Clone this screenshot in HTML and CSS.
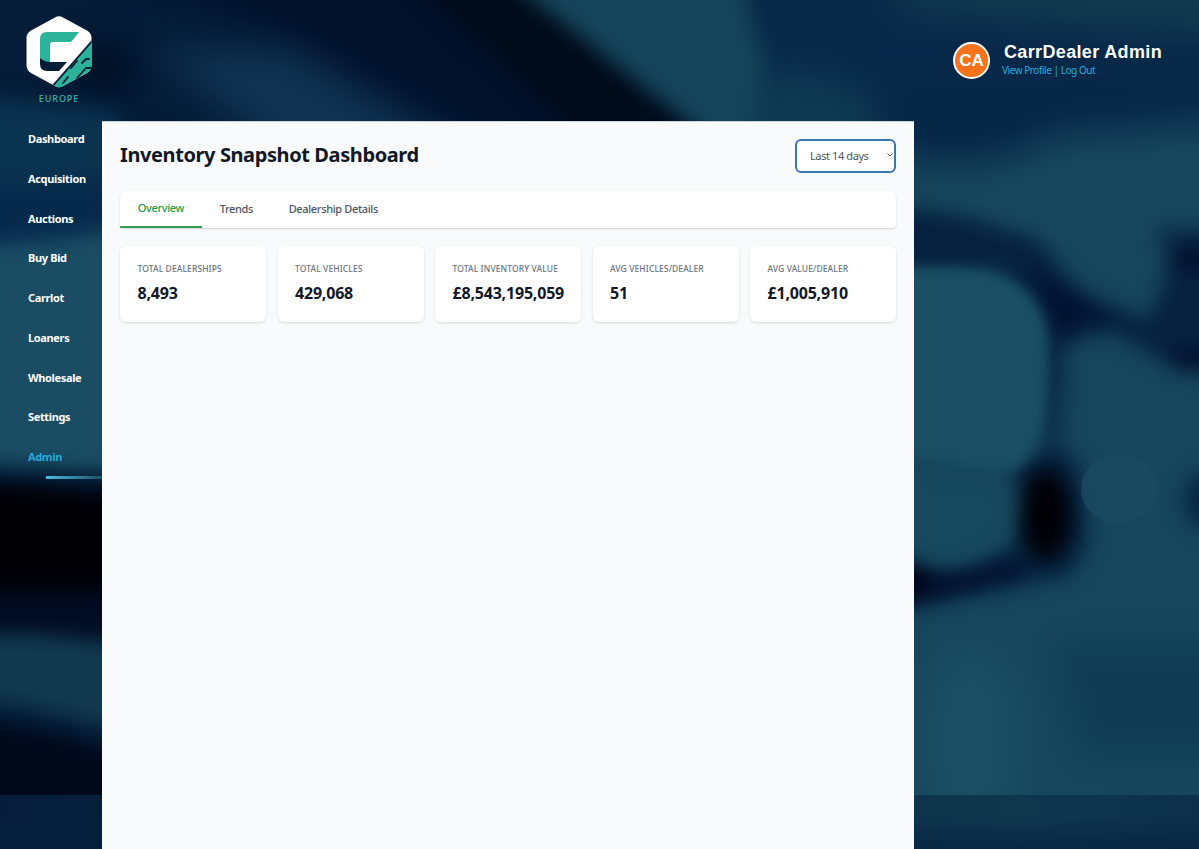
FILE: index.html
```html
<!DOCTYPE html>
<html lang="en">
<head>
    <meta charset="UTF-8">
    <meta name="viewport" content="width=device-width, initial-scale=1.0">
    <title>Inventory Snapshot Dashboard</title>
    <link rel="stylesheet" href="styles.css">
</head>
<body>
    <svg class="backdrop" viewBox="0 0 1199 849" preserveAspectRatio="none" aria-hidden="true">
        <defs>
            <filter id="soft" color-interpolation-filters="sRGB" filterUnits="userSpaceOnUse" x="-100" y="-100" width="1400" height="1050"><feGaussianBlur stdDeviation="10"/></filter>
            <filter id="softer" color-interpolation-filters="sRGB" filterUnits="userSpaceOnUse" x="-100" y="-100" width="1400" height="1050"><feGaussianBlur stdDeviation="18"/></filter>
            <filter id="crisp" color-interpolation-filters="sRGB" filterUnits="userSpaceOnUse" x="-100" y="-100" width="1400" height="1050"><feGaussianBlur stdDeviation="6"/></filter>
            <clipPath id="tile"><rect width="1199" height="795"/></clipPath>
            <linearGradient id="strip" x1="0" x2="1" y1="0" y2="0">
                <stop offset="0" stop-color="#051d3a"/>
                <stop offset="0.7" stop-color="#0c3149"/>
                <stop offset="0.85" stop-color="#10364e"/>
                <stop offset="1" stop-color="#0c304c"/>
            </linearGradient>
            <linearGradient id="stripFade" x1="0" x2="0" y1="0" y2="1">
                <stop offset="0.4" stop-color="#04203f" stop-opacity="0"/>
                <stop offset="1" stop-color="#04203f" stop-opacity="0.6"/>
            </linearGradient>
        </defs>
        <rect width="1199" height="849" fill="#041c38"/>
        <g clip-path="url(#tile)">
            <!-- top band -->
            <g filter="url(#softer)">
                <rect x="740" y="-60" width="560" height="280" fill="#08294a"/>
                <path d="M720 70L840 80L920 130V200H720Z" fill="#0f3a52"/>
                <path d="M900 -60H1300V40L1060 25L900 10Z" fill="#12394f"/>
                <path d="M150 50L290 50L490 170L300 170Z" fill="#0f3351"/>
                <path d="M110 -40H480L760 180H560L300 40Z" fill="#02102b"/>
                <ellipse cx="104" cy="68" rx="30" ry="20" fill="#000a1e"/>
            </g>
            <g filter="url(#soft)">
                <path d="M400 -30H500L760 190H640Z" fill="#000b1a"/>
                <path d="M495 -30H740L765 60L750 150H725Z" fill="#15445a"/>
                <path d="M-40 95L120 112V250H-40Z" fill="#0a3350"/>
                <path d="M-40 185L120 180V235L-40 245Z" fill="#062a4c"/>
                <path d="M-40 248L50 240L150 225V474L60 470L-40 464Z" fill="#1a4d64"/>
            </g>
            <!-- left side below the menu -->
            <g filter="url(#soft)">
                <path d="M-40 480L150 494V640H-40Z" fill="#000005"/>
                <path d="M-40 590H150V655H-40Z" fill="#010b22"/>
                <path d="M-40 634L40 634L150 645V738L50 712L-40 694Z" fill="#11394f"/>
                <path d="M-40 718L50 732L150 760V840H-40Z" fill="#01081a"/>
            </g>
            <!-- right side -->
            <g filter="url(#softer)">
                <rect x="860" y="190" width="400" height="680" fill="#16465c"/>
                <path d="M880 90H1260V105L1050 125L980 168L880 140Z" fill="#062645"/>
                <path d="M860 165L1000 160L1060 135L1260 120V240L1060 245L980 215L860 195Z" fill="#17475d"/>
                <path d="M1050 640H1260V760H1080Z" fill="#103d54"/>
                <ellipse cx="970" cy="740" rx="50" ry="90" fill="#1b4f64"/>
            </g>
            <g filter="url(#soft)">
                <path d="M880 205L960 215L1040 240L1064 275L1095 300L1150 320L1175 250L1150 230H1230V382L1160 360L1110 330L1064 345L1058 460H1048L1044 320L1000 270H880Z" fill="#06213f"/>
                <path d="M1030 262L1070 290L1130 322L1080 322L1058 345L1044 300Z" fill="#021231"/>
                <ellipse cx="1190" cy="259" rx="26" ry="8" fill="#020b29"/>
                <ellipse cx="1190" cy="361" rx="22" ry="9" fill="#020b29"/>
                <ellipse cx="1206" cy="500" rx="22" ry="28" fill="#062442"/>
                <path d="M1010 475L1050 445L1078 460L1088 540L1070 575L990 590L880 612V560L960 572L1020 540Z" fill="#06213f"/>
            </g>
            <g filter="url(#crisp)">
                <path d="M880 269H960C1020 275 1045 298 1046 350C1048 425 1033 462 1008 471C970 471 930 457 880 452Z" fill="#1a4f64"/>
            </g>
            <g filter="url(#soft)">
                <path d="M880 462L950 474L1012 484C1030 510 1008 548 960 563C930 567 912 556 880 540Z" fill="#16485e"/>
                <ellipse cx="1046" cy="515" rx="25" ry="46" fill="#000005"/>
                <path d="M885 560L925 578L1030 562L1020 574L930 598L885 606Z" fill="#010c29"/>
                <ellipse cx="912" cy="580" rx="18" ry="16" fill="#000518"/>
            </g>
            <ellipse cx="1119" cy="489" rx="38" ry="35" fill="#194a61" opacity="0.8"/>
        </g>
        <rect y="795" width="1199" height="54" fill="url(#strip)"/>
        <rect y="795" width="1199" height="54" fill="url(#stripFade)"/>
    </svg>

    <div class="layout">
        <aside class="sidebar">
            <div class="brand">
                <svg class="logo" width="66" height="72" viewBox="0 0 66 72">
                    <defs>
                        <clipPath id="hex"><path d="M29 1.500Q33 -.8 37 1.500L61 14.500Q65.500 17 65.500 22V49Q65.500 54 61 57L37 70Q33 72.500 29 70L5 57Q.5 54 .5 49V22Q.5 17 5 14.500Z"/></clipPath>
                    </defs>
                    <g clip-path="url(#hex)">
                        <rect width="66" height="72" fill="#fff"/>
                        <path d="M67 24L25 72H67Z" fill="#2bb298"/>
                        <path d="M67 24L24 73" fill="none" stroke="#051d36" stroke-width="1.800"/>
                        <g fill="none" stroke="#051d36" stroke-width="1.800" stroke-linecap="round" stroke-linejoin="round">
                            <path d="M63 43H60L56 47"/>
                            <path d="M51 45L45 52"/>
                            <path d="M66 52H60L51 62"/>
                            <path d="M42 61L37 67"/>
                        </g>
                    </g>
                    <path d="M21 16H53L45 26H27Q24 26 24 29V46H14V23Q14 16 21 16Z" fill="#2bb298"/>
                    <path d="M14 42Q18 46 25 46H41L33 55H21Q14 55 14 48Z" fill="#051d36"/>
                </svg>
                <span class="region">EUROPE</span>
            </div>
            <nav class="menu">
                <a>Dashboard</a>
                <a>Acquisition</a>
                <a>Auctions</a>
                <a>Buy Bid</a>
                <a>Carrlot</a>
                <a>Loaners</a>
                <a>Wholesale</a>
                <a>Settings</a>
                <a class="active">Admin</a>
            </nav>
        </aside>

        <main class="content">
            <div class="page-header">
                <h1>Inventory Snapshot Dashboard</h1>
                <button class="period">
                    <span>Last 14 days</span>
                    <svg width="6" height="4" viewBox="0 0 6 4"><path d="M.5 .5L3 3L5.500 .5" fill="none" stroke="#555" stroke-width=".9"/></svg>
                </button>
            </div>
            <div class="tabs">
                <a class="tab selected">Overview</a>
                <a class="tab">Trends</a>
                <a class="tab">Dealership Details</a>
            </div>
            <div class="stats">
                <div class="card">
                    <div class="card-label">TOTAL DEALERSHIPS</div>
                    <div class="card-value">8,493</div>
                </div>
                <div class="card">
                    <div class="card-label">TOTAL VEHICLES</div>
                    <div class="card-value">429,068</div>
                </div>
                <div class="card">
                    <div class="card-label">TOTAL INVENTORY VALUE</div>
                    <div class="card-value">£8,543,195,059</div>
                </div>
                <div class="card">
                    <div class="card-label">AVG VEHICLES/DEALER</div>
                    <div class="card-value">51</div>
                </div>
                <div class="card">
                    <div class="card-label">AVG VALUE/DEALER</div>
                    <div class="card-value">£1,005,910</div>
                </div>
            </div>
        </main>

        <div class="account">
            <div class="avatar">CA</div>
            <div class="account-info">
                <div class="account-name">CarrDealer Admin</div>
                <div class="account-links"><a>View Profile</a> | <a>Log Out</a></div>
            </div>
        </div>
    </div>
</body>
</html>
```
FILE: styles.css
```css
* {
    box-sizing: border-box;
}
body {
    margin: 0;
    height: 849px;
    overflow: hidden;
    background: #041c38;
    font-family: 'Noto Sans', 'Open Sans', sans-serif;
    color: #111827;
}
.backdrop {
    position: absolute;
    top: 0;
    left: 0;
    width: 1199px;
    height: 849px;
    z-index: -1;
}
.layout {
    display: grid;
    grid-template-columns: 102px 812px 1fr;
    height: 849px;
}
.brand {
    display: flex;
    flex-direction: column;
    align-items: center;
    width: 66px;
    height: 119px;
    margin-left: 26px;
    padding-top: 16px;
}
.logo {
    display: block;
}
.region {
    margin-top: 4px;
    font-size: 9px;
    font-weight: 500;
    line-height: 14px;
    letter-spacing: 0.9px;
    color: #3cb5ae;
}
.menu {
    display: flex;
    flex-direction: column;
}
.menu a {
    height: 39.75px;
    padding-left: 28px;
    font-size: 11px;
    font-weight: 700;
    line-height: 40px;
    letter-spacing: -0.35px;
    color: #fff;
    white-space: nowrap;
}
.menu a.active {
    color: #27a9dc;
}
.menu .active::after {
    content: "";
    display: block;
    height: 3px;
    margin: -1px 0 0 18px;
    background: linear-gradient(to right, #46bde0, #205066);
}
.content {
    margin-top: 121px;
    padding: 18px 18px 0;
    background: #f9fafc;
    border-top: 1px solid #cbd3dc;
}
.page-header {
    display: flex;
    justify-content: space-between;
    height: 51px;
}
h1 {
    margin: 0;
    font-size: 20px;
    line-height: 30px;
    letter-spacing: -0.4px;
    white-space: nowrap;
}
.period {
    display: flex;
    align-items: center;
    justify-content: space-between;
    width: 101px;
    height: 34px;
    margin-top: -1px;
    padding: 0 1px 2px 13px;
    border: 2px solid #3d75b0;
    border-radius: 6px;
    background: #fff;
    font-family: inherit;
    font-size: 11px;
    letter-spacing: -0.4px;
    color: #4b5563;
}
.tabs {
    display: flex;
    height: 37px;
    margin-bottom: 18px;
    border-radius: 6px 6px 3px 3px;
    background: #fff;
    box-shadow: 0 1px 2px rgba(0, 0, 0, 0.16);
}
.tab {
    padding: 0 17.8px;
    font-size: 11px;
    font-weight: 500;
    line-height: 35px;
    color: #4b5563;
    letter-spacing: -0.35px;
}
.tab.selected {
    line-height: 34px;
    border-bottom: 2px solid #349c55;
    color: #249b45;
}
.stats {
    display: grid;
    grid-template-columns: repeat(5, 1fr);
    gap: 11.500px;
}
.card {
    height: 76px;
    padding: 16px 0 0 17.500px;
    border-radius: 6px;
    background: #fff;
    box-shadow: 0 1px 3px rgba(0, 0, 0, 0.13);
    white-space: nowrap;
}
.card-label {
    font-size: 8.500px;
    font-weight: 500;
    line-height: 14px;
    letter-spacing: 0.1px;
    color: #6b7280;
}
.card-value {
    margin-top: 6px;
    font-size: 16px;
    font-weight: 700;
    line-height: 23px;
    letter-spacing: -0.2px;
}
.account {
    display: flex;
    align-items: flex-start;
    padding: 42px 0 0 39px;
}
.avatar {
    width: 37px;
    height: 37px;
    border: 2px solid #fff;
    border-radius: 50%;
    background: #f9731c;
    font: bold 17px/34px 'Liberation Sans', sans-serif;
    text-align: center;
    color: #fff;
}
.account-info {
    padding-left: 12px;
}
.account-name {
    padding-left: 2px;
    font: bold 18px/20px 'Liberation Sans', sans-serif;
    letter-spacing: 0.35px;
    color: #fff;
    white-space: nowrap;
}
.account-links {
    font-size: 10px;
    line-height: 16px;
    letter-spacing: -0.45px;
    color: #2baadb;
}
```
